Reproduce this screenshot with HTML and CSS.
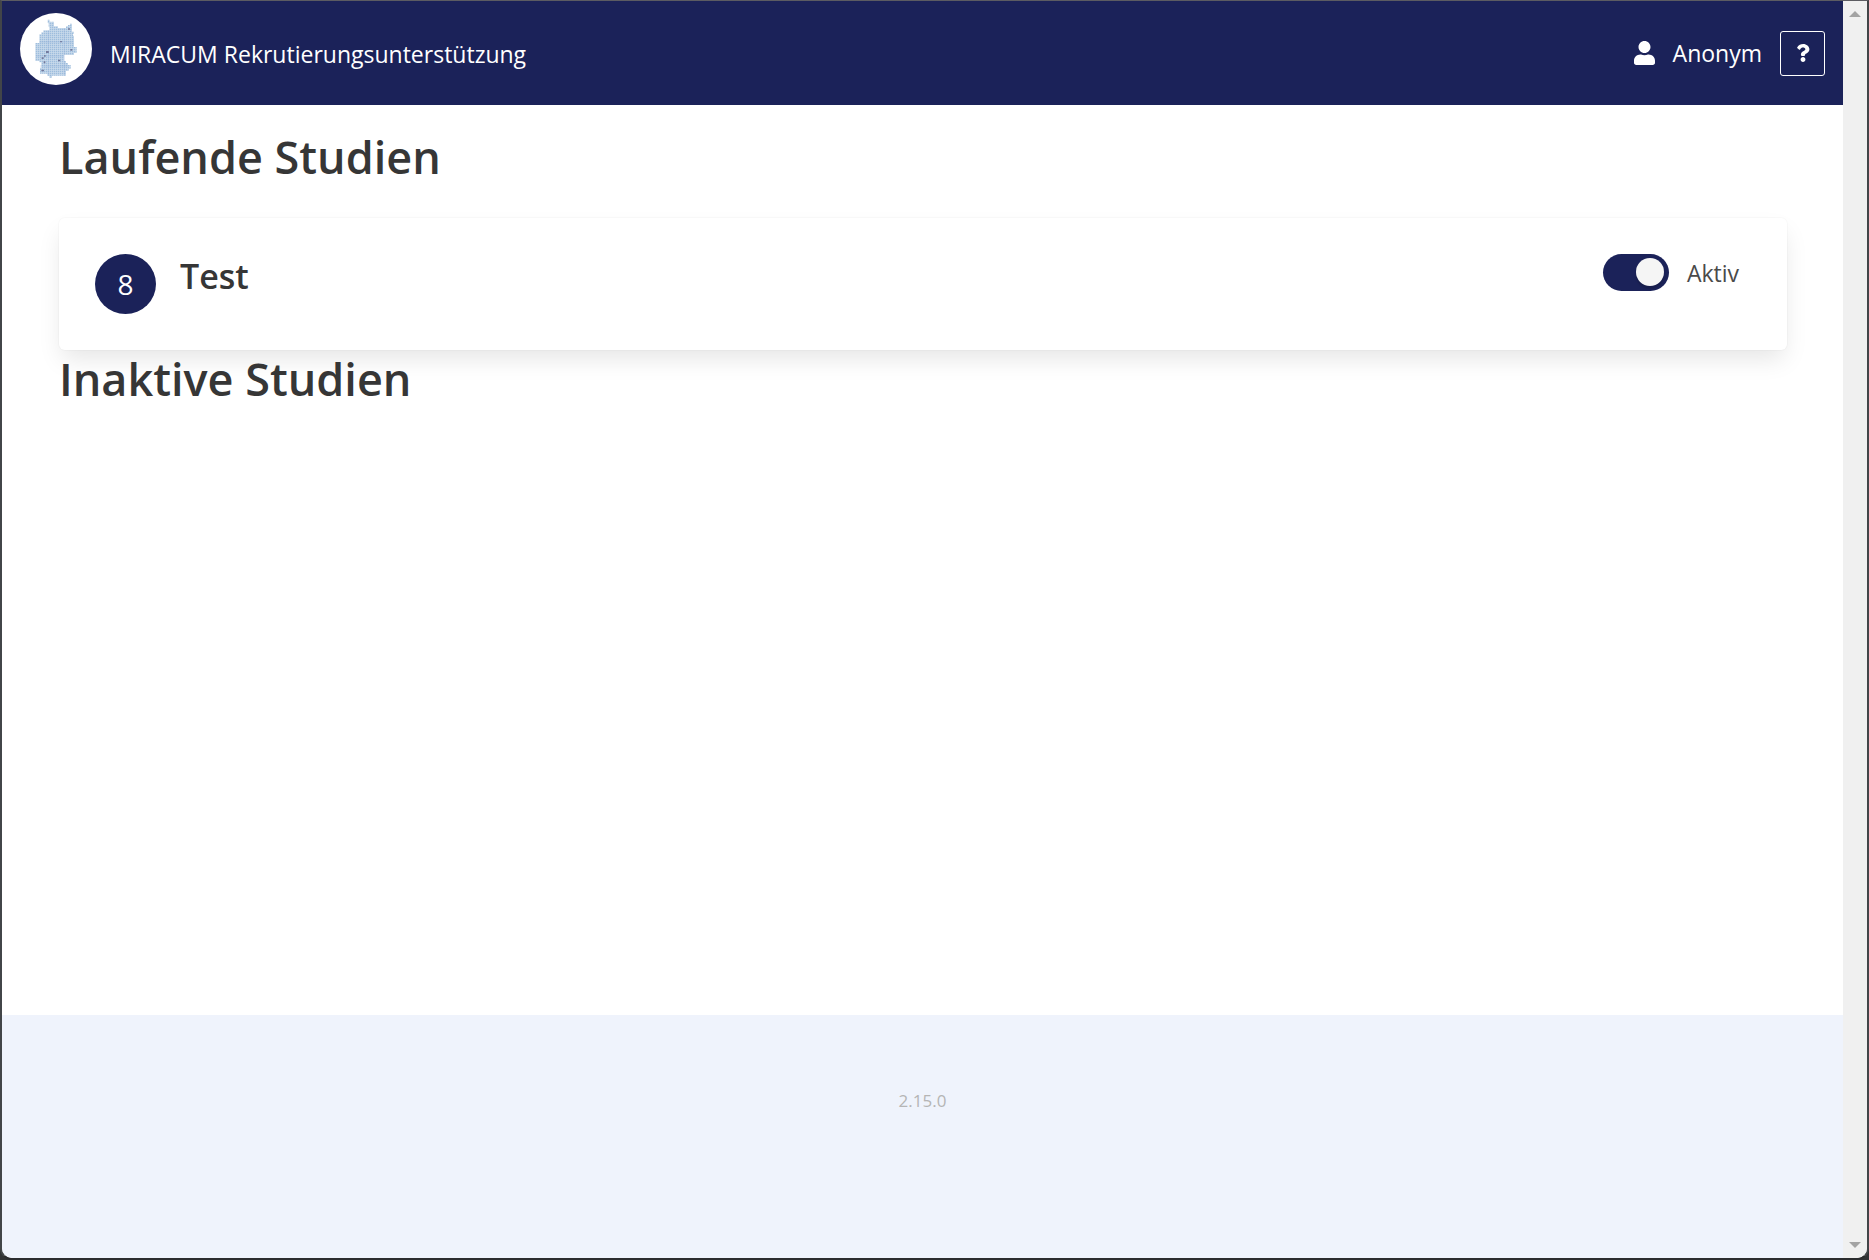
FILE: index.html
```html
<!DOCTYPE html>
<html lang="de">
<head>
<meta charset="utf-8">
<meta name="viewport" content="width=device-width, initial-scale=1">
<title>MIRACUM Rekrutierungsunterstützung</title>
<link rel="stylesheet" href="styles.css">
</head>
<body>
<div class="window">
  <div class="page">
    <header class="navbar">
      <a class="brand" href="#">
        <svg class="logo" viewBox="0 0 216 216" aria-hidden="true">
          <defs>
            <pattern id="dots" width="6" height="6" patternUnits="userSpaceOnUse">
              <rect width="6" height="6" fill="#cddded"/>
              <rect width="4" height="4" fill="#9dbddd"/>
            </pattern>
          </defs>
          <circle cx="108" cy="108" r="108" fill="#fff"/>
          <path fill="url(#dots)" d="M83 20H89V26H102V40H114V45H138V40H144V36H150V32H156V56H162V62H159V68H162V102H170V120H162V126H132V144H138V150H144V156H152V168H146V174H138V188H96V194H88V188H82V182H60V164H64V148H58V144H46V90H58V64H64V58H70V52H88V42H86V30H83Z"/>
          <path fill="#73799b" d="M144 46h6v4h-6zM120 84h6v4h-6zM78 114h9v6h-9zM72 126h5v5h-5zM65 133h6v5h-6zM71 145h5v6h-5zM114 140h7v5h-7zM151 108h6v5h-6zM64 170h8v5h-8z"/>
          <path stroke="#8eacd8" stroke-width="1" fill="none" d="M58 87h100M85 52v136M133 45v142M48 129h84M60 159h84"/>
        </svg>
        <span>MIRACUM Rekrutierungsunterstützung</span>
      </a>
      <div class="account">
        <svg class="user-icon" viewBox="0 0 448 512" aria-hidden="true"><path fill="currentColor" d="M224 256c70.700 0 128-57.300 128-128S294.700 0 224 0 96 57.300 96 128s57.300 128 128 128zm89.600 32h-16.700c-22.200 10.200-46.900 16-72.900 16s-50.600-5.800-72.900-16h-16.700C60.200 288 0 348.200 0 422.400V464c0 26.500 21.500 48 48 48h352c26.500 0 48-21.500 48-48v-41.600c0-74.200-60.200-134.400-134.400-134.400z"/></svg>
        <span>Anonym</span>
        <button class="help" type="button" aria-label="Hilfe">
          <svg viewBox="0 0 384 512" aria-hidden="true"><path fill="currentColor" d="M202 0C122 0 70 33 29 91c-7 11-5 25 5 33l43 33c11 8 25 6 33-4 25-32 44-50 82-50 30 0 67 19 67 48 0 22-18 33-47 49-35 19-80 44-80 104v10c0 13 11 24 24 24h72c13 0 24-11 24-24v-6c0-42 122-44 122-157C374 66 286 0 202 0zm-10 373c-38 0-69 31-69 69s31 70 69 70 69-32 69-70-31-69-69-69z"/></svg>
        </button>
      </div>
    </header>
    <main class="content">
      <h1 class="title">Laufende Studien</h1>
      <article class="card">
        <span class="count">8</span>
        <h2 class="study">Test</h2>
        <label class="switch">
          <input type="checkbox" checked>
          <span>Aktiv</span>
        </label>
      </article>
      <h1 class="title">Inaktive Studien</h1>
    </main>
    <footer class="footer">2.15.0</footer>
  </div>
  <div class="scrollbar" aria-hidden="true">
    <svg viewBox="0 0 12 6"><path fill="#a3a3a3" d="M0 6 6 0l6 6z"/></svg>
    <svg viewBox="0 0 12 6"><path fill="#a3a3a3" d="M0 0h12L6 6z"/></svg>
  </div>
</div>
</body>
</html>
```
FILE: styles.css
```css
* {
  box-sizing: border-box;
}

body {
  margin: 0;
  background: #303234;
  color: #4a4a4a;
  font-family: "Open Sans", "Noto Sans", sans-serif;
  font-size: 23px;
  line-height: 36px;
}

.window {
  display: flex;
  min-height: 100vh;
  border: solid #424548;
  border-width: 1px 2px 2px;
  border-top-color: #5c5c62;
  border-bottom-color: #2b2c2e;
  border-radius: 0 0 12px 12px;
  overflow: hidden;
  background: #fff;
}

.page {
  flex: 1;
  display: flex;
  flex-direction: column;
}

.navbar {
  display: flex;
  justify-content: space-between;
  min-height: 104px;
  padding: 12px 18px;
  background: #1b2259;
  color: #fff;
}

.brand {
  display: flex;
  gap: 18px;
  color: inherit;
  text-decoration: none;
}

.brand span {
  padding-top: 23px;
}

.logo {
  width: 72px;
  height: 72px;
}

.account {
  display: flex;
  align-items: center;
  gap: 18px;
}

.user-icon {
  width: 21px;
  height: 24px;
}

.help {
  display: flex;
  align-items: center;
  justify-content: center;
  width: 45px;
  height: 45px;
  padding: 0;
  border: 1px solid #fff;
  border-radius: 3px;
  background: transparent;
  color: inherit;
}

.help svg {
  width: 14px;
  height: 18px;
}

.content {
  flex: 1;
  padding: 23px 56px 24px 57px;
}

.title,
.study {
  margin: 0;
  color: #363636;
  font-weight: 600;
}

.title {
  font-size: 45px;
  line-height: 58px;
}

.card {
  display: flex;
  align-items: flex-start;
  gap: 24px;
  min-height: 132px;
  margin-top: 32px;
  padding: 36px 48px 36px 36px;
  border-radius: 6px;
  background: #fff;
  box-shadow: 0 12px 24px -3px rgba(10, 10, 10, 0.1), 0 0 0 1px rgba(10, 10, 10, 0.02);
}

.count {
  width: 61px;
  height: 60px;
  border-radius: 50%;
  background: #1b2259;
  color: #fff;
  font-size: 28px;
  line-height: 60px;
  text-align: center;
}

.study {
  flex: 1;
  font-size: 34px;
  line-height: 45px;
}

.switch {
  display: flex;
  align-items: center;
  gap: 18px;
}

.switch input {
  appearance: none;
  display: flex;
  justify-content: flex-start;
  width: 66px;
  height: 37px;
  margin: 0;
  padding: 4px 5px;
  border-radius: 19px;
  background: #b5b5b5;
}

.switch input:checked {
  justify-content: flex-end;
  background: #1b2259;
}

.switch input::before {
  content: "";
  width: 28px;
  height: 28px;
  border-radius: 50%;
  background: #f5f5f5;
  box-shadow: 0 3px 2px rgba(0, 0, 0, 0.15);
}

.footer {
  min-height: 243px;
  padding: 72px 36px;
  background: #eff3fc;
  color: #b5b5b5;
  font-size: 17px;
  line-height: 27px;
  text-align: center;
}

.scrollbar {
  display: flex;
  flex-direction: column;
  align-items: center;
  justify-content: space-between;
  width: 24px;
  padding: 10px 0;
  background: #f0f0f0;
}

.scrollbar svg {
  width: 12px;
  height: 6px;
}
```
